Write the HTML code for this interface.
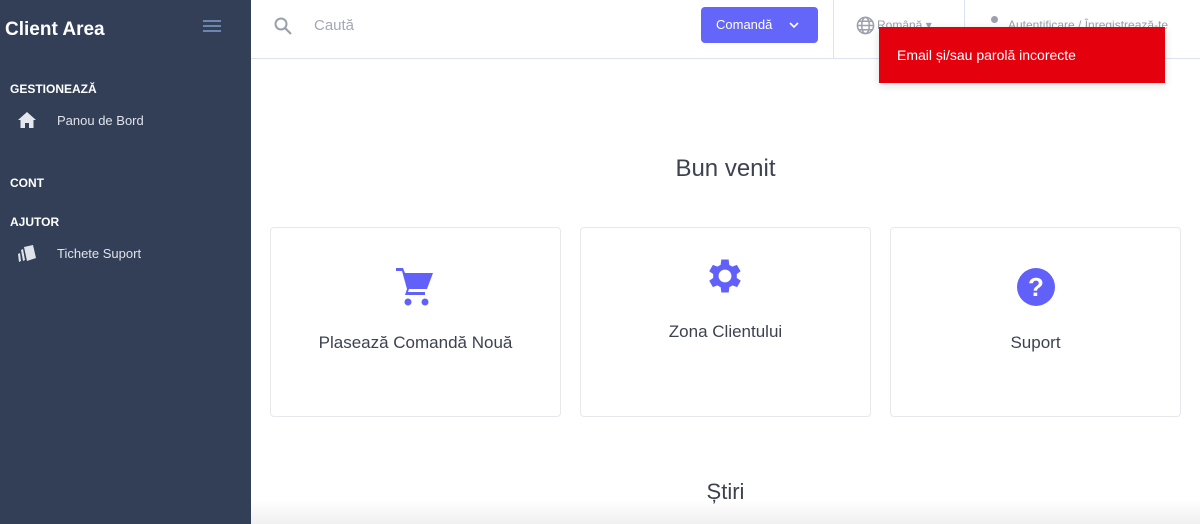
<!DOCTYPE html>
<html><head><meta charset="utf-8"><style>
*{margin:0;padding:0;box-sizing:border-box}
body{width:1200px;height:524px;overflow:hidden;font-family:"Liberation Sans",sans-serif;background:#fff;position:relative}
.sb{position:absolute;left:0;top:0;width:251px;height:524px;background:#323f56;color:#fff}
.sb h1{position:absolute;left:5px;top:19px;font-size:19px;font-weight:bold}
.ham{position:absolute;left:203px;top:20px;width:18px}
.ham i{display:block;height:2px;background:#6d86b0;margin-bottom:3px}
.sec{position:absolute;left:10px;font-size:12px;font-weight:bold;color:#fff}
.item{position:absolute;left:57px;font-size:13px;color:#dfe3ea}
.top{position:absolute;left:251px;top:0;right:0;height:59px;border-bottom:1px solid #dbe3ee}
.card{position:absolute;top:227px;width:291px;height:190px;border:1px solid #e6e8ec;border-radius:4px;text-align:center;font-size:17px;color:#3d4250}
</style></head><body>
<div class="sb">
<h1>Client Area</h1>
<div class="ham"><i></i><i></i><i></i></div>
<div class="sec" style="top:82px">GESTIONEAZĂ</div>
<svg style="position:absolute;left:18px;top:112px" width="18" height="16" viewBox="0 0 18 16"><path d="M9 0L0 8h2.5v8h4.5v-5h4v5h4.5V8H18z" fill="#e4e8ee"/></svg>
<div class="item" style="top:113px">Panou de Bord</div>
<div class="sec" style="top:176px">CONT</div>
<div class="sec" style="top:215px">AJUTOR</div>
<svg style="position:absolute;left:17px;top:245px" width="20" height="18" viewBox="0 0 20 18"><path d="M7 2l9-2 3 13-9 3z" fill="#dfe3ea"/><path d="M4 5l2-1 2 11-2 1zM1 9l2-1 1 8-2 1z" fill="#dfe3ea"/></svg>
<div class="item" style="top:246px">Tichete Suport</div>
</div>
<div class="top">
<svg style="position:absolute;left:23px;top:17px" width="18" height="18" viewBox="0 0 18 18"><circle cx="7" cy="7" r="5.5" stroke="#9aa1ad" stroke-width="2" fill="none"/><path d="M11 11l6 6" stroke="#9aa1ad" stroke-width="2.2"/></svg>
<div style="position:absolute;left:63px;top:17px;font-size:15px;color:#a3a8b3">Caută</div>
<div style="position:absolute;left:450px;top:7px;width:117px;height:36px;background:#6366f8;border-radius:4px;color:#fff;font-size:13px;padding:10px 0 0 15px">Comandă<svg style="position:absolute;left:88px;top:15px" width="10" height="6" viewBox="0 0 10 6"><path d="M1 1l4 4 4-4" stroke="#fff" stroke-width="1.6" fill="none"/></svg></div>
<div style="position:absolute;left:582px;top:0;width:1px;height:59px;background:#dbe3ee"></div>
<div style="position:absolute;left:713px;top:0;width:1px;height:59px;background:#dbe3ee"></div>
<svg style="position:absolute;left:605px;top:16px" width="19" height="19" viewBox="0 0 20 20" fill="none" stroke="#9aa1ad" stroke-width="1.6"><circle cx="10" cy="10" r="8.5"/><ellipse cx="10" cy="10" rx="4" ry="8.5"/><path d="M1.5 10h17M3 5.5h14M3 14.5h14"/></svg>
<div style="position:absolute;left:626px;top:18px;font-size:12px;color:#9aa1ad">Română ▾</div>
<div style="position:absolute;left:740px;top:16px;width:7px;height:7px;border-radius:50%;background:#9aa1ad"></div>
<div style="position:absolute;left:757px;top:18px;font-size:12px;color:#9aa1ad">Autentificare / Înregistrează-te</div>
</div>
<div style="position:absolute;left:879px;top:27px;width:286px;height:56px;background:#e5000d;color:#fff;font-size:14px;padding:20px 0 0 18px;box-shadow:0 2px 8px rgba(0,0,0,.15)">Email și/sau parolă incorecte</div>
<div style="position:absolute;left:251px;right:0;top:155px;text-align:center;font-size:24px;color:#3d4250">Bun venit</div>
<div class="card" style="left:270px">
<svg style="position:absolute;left:124px;top:38px" width="40" height="40" viewBox="0 0 40 40"><path d="M1 2h7l2 5h28l-6 16H14l-1 3h17v3H10l2-6L7 5H1z" fill="#6161fa"/><circle cx="13" cy="36" r="3.5" fill="#6161fa"/><circle cx="30" cy="36" r="3.5" fill="#6161fa"/></svg>
<div style="position:absolute;left:0;right:0;top:105px">Plasează Comandă Nouă</div></div>
<div class="card" style="left:580px">
<svg style="position:absolute;left:122px;top:26px" width="44" height="44" viewBox="0 0 24 24"><path fill="#6161fa" d="M19.4 13a7.5 7.5 0 000-2l2.1-1.6-2-3.5-2.5 1a7.5 7.5 0 00-1.7-1L15 3h-4l-.4 2.9a7.5 7.5 0 00-1.7 1l-2.5-1-2 3.5L6.6 11a7.5 7.5 0 000 2l-2.2 1.6 2 3.5 2.5-1a7.5 7.5 0 001.7 1L11 21h4l.4-2.9a7.5 7.5 0 001.7-1l2.5 1 2-3.5zM13 15.5A3.5 3.5 0 1113 8.5a3.5 3.5 0 010 7z" transform="translate(-1 0)"/></svg>
<div style="position:absolute;left:0;right:0;top:94px">Zona Clientului</div></div>
<div class="card" style="left:890px">
<svg style="position:absolute;left:125px;top:39px" width="40" height="40" viewBox="0 0 40 40"><circle cx="20" cy="20" r="19" fill="#6161fa"/><text x="20" y="29" text-anchor="middle" font-family="Liberation Sans" font-weight="bold" font-size="26" fill="#fff">?</text></svg>
<div style="position:absolute;left:0;right:0;top:105px">Suport</div></div>
<div style="position:absolute;left:251px;right:0;top:479px;text-align:center;font-size:22px;color:#3d4250">Știri</div>
<div style="position:absolute;left:251px;right:0;top:500px;height:24px;background:linear-gradient(rgba(0,0,0,0),rgba(0,0,0,.06))"></div>
</body></html>
